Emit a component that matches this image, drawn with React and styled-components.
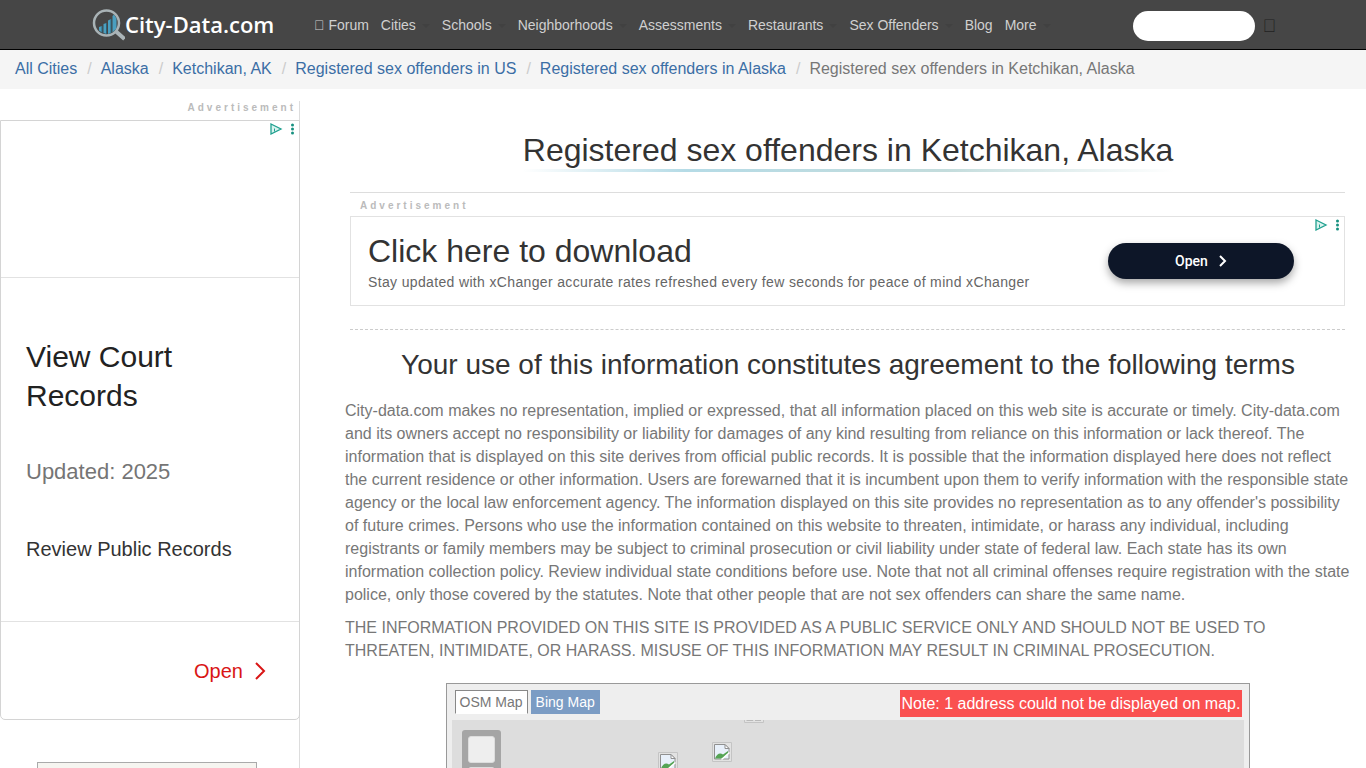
import React, { useState } from 'react';
import styled, { createGlobalStyle } from 'styled-components';


const GlobalStyle = createGlobalStyle`
* { box-sizing: border-box; }
body {
    margin: 0;
    font-family: "Liberation Sans", Arial, sans-serif;
    font-size: 16px;
    line-height: 23px;
    color: #777;
    background: #fff;
    overflow: hidden;
}
`

const NavBar = styled.header`
display: flex;
align-items: center;
height: 50px;
padding: 2px 0 0 92px;
background: #464646;
border-bottom: 1px solid #000;
`
const Logo = styled.a`
display: flex;
align-items: center;
width: 216px;
padding-bottom: 2px;
color: #fff;
text-decoration: none;
font-family: "Open Sans", sans-serif;
font-size: 22px;
font-weight: 600;
`
const Menu = styled.nav`
display: flex;
flex: 1;
font-size: 14px;
`
const MenuLink = styled.a`
display: flex;
align-items: center;
padding: 0 6px;
color: #d0d0d0;
text-decoration: none;
white-space: pre;
`
const Caret = styled.span`
width: 8px;
margin-left: 6px;
border: 4px solid transparent;
border-top-color: #414141;
border-bottom: 0;
`
const Search = styled.form`
display: flex;
align-items: center;
gap: 8px;
margin-right: 90px;
`
const SearchInput = styled.input`
width: 122px;
height: 30px;
padding: 0 12px;
border: 0;
border-radius: 15px;
background: #fff;
`
const SearchButton = styled.button`
padding: 2px 0 0;
border: 0;
background: none;
color: #222;
font-family: inherit;
font-size: 18px;
`

const Crumbs = styled.ol`
display: flex;
height: 39px;
margin: 0;
padding: 7px 15px 9px;
list-style: none;
background: #f5f5f5;
`
const Crumb = styled.li`
& + &::before {
    content: "/";
    padding: 0 9px 0 10px;
    color: #ccc;
}
a {
    color: #3b6ea5;
    text-decoration: none;
}
`

const Page = styled.div`
display: flex;
align-items: stretch;
`
const Sidebar = styled.aside`
width: 300px;
margin-top: 12px;
border-right: 1px solid #ddd;
`
const AdLabel = styled.div`
padding: ${props => props.$right ? '0 3px 0 0' : '0 0 0 10px'};
font-size: 10px;
line-height: 13px;
font-weight: bold;
letter-spacing: 3px;
color: #bbb;
text-align: ${props => props.$right ? 'right' : 'left'};
`
const SideAd = styled.div`
position: relative;
width: 300px;
margin-top: 6px;
border: 1px solid #d4d4d4;
border-radius: 0 0 5px 5px;
`
const SideAdPart = styled.div`
height: ${props => props.height};
padding: 0 25px;
border-top: ${props => props.$line ? '1px solid #e2e2e2' : '0'};
`
const SideTitle = styled.div`
padding-top: 59px;
font-size: 30px;
line-height: 39px;
color: #222;
`
const SideNote = styled.div`
margin-top: 43px;
font-size: 22px;
line-height: 28px;
color: #757575;
`
const SideText = styled.div`
margin-top: 49px;
font-size: 20px;
line-height: 28px;
color: #333;
`
const SideOpen = styled.a`
display: flex;
align-items: center;
justify-content: flex-end;
gap: 12px;
height: 98px;
padding-right: 8px;
color: #d91616;
font-size: 20px;
text-decoration: none;
`
const AdMarks = styled.svg`
position: absolute;
top: 2px;
right: 4px;
`
const SideBox = styled.div`
height: 250px;
margin: 42px 42px 0 37px;
border: 1px solid #aaa;
background: #f6f5f0;
`

const Main = styled.main`
flex: 1;
min-width: 0;
padding: 0 15px 0 45px;
`
const Title = styled.h1`
width: fit-content;
margin: 42px auto 20px;
font-size: 32px;
line-height: 38px;
font-weight: normal;
color: #333;
border-bottom: 3px solid;
border-image: linear-gradient(to right, #fff, #b5dbe6 25%, #c3dcdc 65%, #fff) 1;
`
const AdBlock = styled.section`
margin: 0 6px 0 5px;
padding: 6px 0 23px;
border-top: 1px solid #ddd;
border-bottom: 1px dashed #ccc;
`
const Banner = styled.div`
position: relative;
display: flex;
align-items: center;
justify-content: space-between;
height: 90px;
margin-top: 4px;
padding: 0 50px 0 17px;
border: 1px solid #e2e2e2;
`
const BannerTitle = styled.div`
padding-top: 5px;
font-size: 32px;
line-height: 36px;
color: #333;
`
const BannerText = styled.div`
font-size: 14px;
line-height: 26px;
color: #666;
letter-spacing: 0.025em;
`
const OpenButton = styled.button`
display: flex;
align-items: center;
justify-content: center;
gap: 11px;
width: 186px;
height: 36px;
border: 0;
border-radius: 18px;
background: #0d1628;
box-shadow: 0 4px 8px rgba(0, 0, 0, 0.35);
color: #fff;
font-family: Roboto, sans-serif;
font-size: 14px;
font-weight: 500;
`
const Terms = styled.h2`
margin: 18px 0 17px;
font-size: 28px;
line-height: 34px;
font-weight: normal;
text-align: center;
color: #333;
`
const Paragraph = styled.p`
margin: 0 0 10px;
`
const MapPanel = styled.section`
width: 80%;
height: 500px;
margin: 21px auto 0;
padding: 6px 5px;
border: 1px solid #999;
background: #eee;
`
const MapBar = styled.div`
display: flex;
align-items: flex-start;
height: 30px;
padding: 0 2px 0 3px;
gap: 3px;
`
const MapTab = styled.button`
height: 24px;
padding: 0 4px;
border: 1px solid ${props => props.$active ? '#888' : '#7b9cc4'};
border-bottom-color: ${props => props.$active ? '#fff' : '#7b9cc4'};
background: ${props => props.$active ? '#fff' : '#7b9cc4'};
color: ${props => props.$active ? '#777' : '#fff'};
font-family: inherit;
font-size: 14px;
`
const Note = styled.span`
margin-left: auto;
padding: 2px;
background: #fa5050;
color: #fff;
`
const MapCanvas = styled.div`
position: relative;
height: 460px;
overflow: hidden;
background: #ddd;
`
const Zoomer = styled.div`
position: absolute;
top: 10px;
left: 10px;
padding: 6px;
border-radius: 3px;
background: #a5a5a5;
`
const ZoomCell = styled.button`
display: block;
width: 27px;
height: 27px;
margin-bottom: 4px;
border: 1px solid #ddd;
border-radius: 3px;
background: #eee;
`
const Pin = styled.svg`
position: absolute;
left: ${props => props.x}px;
top: ${props => props.y}px;
`

const menu = [
    { name: 'Cities', more: true },
    { name: 'Schools', more: true },
    { name: 'Neighborhoods', more: true },
    { name: 'Assessments', more: true },
    { name: 'Restaurants', more: true },
    { name: 'Sex Offenders', more: true },
    { name: 'Blog' },
    { name: 'More', more: true },
]

const crumbs = ['All Cities', 'Alaska', 'Ketchikan, AK', 'Registered sex offenders in US', 'Registered sex offenders in Alaska']

const pins = [{ x: 292, y: -17 }, { x: 206, y: 32 }, { x: 260, y: 22 }]

function LogoMark(){
    return(
        <svg width="33" height="32" viewBox="0 0 33 32">
            <path d="M23.5 22 L32.5 30" stroke="#aab4b8" strokeWidth="4" />
            <path d="M7 18l3-1v6.500l-3-2z M11.500 15l3-1v11l-3-1z M16 11.500l3-1.500v14l-3 1z M20.500 7l1.500-1.500l2.500 4v10l-4 4z" fill="#4a9fc0" />
            <path d="M10 17v6.500 M14.500 14v11 M19 10v14" stroke="#2c6279" strokeWidth="1" />
            <circle cx="14.5" cy="14" r="12.500" fill="none" stroke="#a9b3b6" strokeWidth="2.500" />
        </svg>
    )
}

function Marks(){
    return(
        <AdMarks width="25" height="12" viewBox="0 0 25 12">
            <path d="M1 1 L11 6 L1 11 Z" fill="#d9f3ef" stroke="#1fa08f" strokeWidth="1.300" />
            <path d="M4.500 5.500v3" stroke="#1fa08f" />
            <circle cx="22.5" cy="2" r="1.500" fill="#16907f" />
            <circle cx="22.5" cy="6" r="1.500" fill="#16907f" />
            <circle cx="22.5" cy="10" r="1.500" fill="#16907f" />
        </AdMarks>
    )
}

function Chevron({ size, width }){
    return(
        <svg width={size / 2 + 2} height={size} viewBox={`0 0 ${size / 2 + 2} ${size}`}>
            <path d={`M1 1 L${size / 2} ${size / 2} L1 ${size - 1}`} fill="none" stroke="currentColor" strokeWidth={width} />
        </svg>
    )
}

function BrokenPin({ x, y }){
    return(
        <Pin x={x} y={y} width="20" height="20" viewBox="0 0 20 20">
            <path d="M.5 19.500V.5h19v19z" fill="#e2e2e2" stroke="#c4c4c4" />
            <path d="M2.500 2.500h10.500l4 4v10.500H2.500z" fill="#e8f0fa" stroke="#909090" />
            <path d="M13 2.500v4h4z" fill="#fff" stroke="#909090" />
            <path d="M3 16.500c2-5 5-6 8-4l5-3.500v2.500l-5.500 5z" fill="#55a455" />
            <path d="M9.500 17.500l8-7" stroke="#fff" strokeWidth="1.500" />
        </Pin>
    )
}

export default function App(){
    const [ tab, setTab ] = useState('OSM Map');

    return(
        <>
            <GlobalStyle />
            <NavBar>
                <Logo href="#"><LogoMark />City-Data.com</Logo>
                <Menu>
                    <MenuLink href="#">{'\uf086 Forum'}</MenuLink>
                    {menu.map(item => (
                        <MenuLink href="#" key={item.name}>{item.name}{item.more && <Caret />}</MenuLink>
                    ))}
                </Menu>
                <Search onSubmit={e => e.preventDefault()}>
                    <SearchInput type="text" aria-label="Search" />
                    <SearchButton type="submit" aria-label="Submit search">{'\uf002'}</SearchButton>
                </Search>
            </NavBar>
            <Crumbs>
                {crumbs.map(name => <Crumb key={name}><a href="#">{name}</a></Crumb>)}
                <Crumb>Registered sex offenders in Ketchikan, Alaska</Crumb>
            </Crumbs>
            <Page>
                <Sidebar>
                    <AdLabel $right>Advertisement</AdLabel>
                    <SideAd>
                        <Marks />
                        <SideAdPart height="156px" />
                        <SideAdPart height="344px" $line>
                            <SideTitle>View Court Records</SideTitle>
                            <SideNote>Updated: 2025</SideNote>
                            <SideText>Review Public Records</SideText>
                        </SideAdPart>
                        <SideAdPart height="98px" $line>
                            <SideOpen href="#">Open <Chevron size={18} width={2} /></SideOpen>
                        </SideAdPart>
                    </SideAd>
                    <SideBox />
                </Sidebar>
                <Main>
                    <Title>Registered sex offenders in Ketchikan, Alaska</Title>
                    <AdBlock>
                        <AdLabel>Advertisement</AdLabel>
                        <Banner>
                            <Marks />
                            <div>
                                <BannerTitle>Click here to download</BannerTitle>
                                <BannerText>Stay updated with xChanger accurate rates refreshed every few seconds for peace of mind xChanger</BannerText>
                            </div>
                            <OpenButton>Open <Chevron size={12} width={2} /></OpenButton>
                        </Banner>
                    </AdBlock>
                    <Terms>Your use of this information constitutes agreement to the following terms</Terms>
                    <Paragraph>
                        City-data.com makes no representation, implied or expressed, that all information placed on this web site is accurate or timely. City-data.com and its owners accept no responsibility or liability for damages of any kind resulting from reliance on this information or lack thereof. The information that is displayed on this site derives from official public records. It is possible that the information displayed here does not reflect the current residence or other information. Users are forewarned that it is incumbent upon them to verify information with the responsible state agency or the local law enforcement agency. The information displayed on this site provides no representation as to any offender's possibility of future crimes. Persons who use the information contained on this website to threaten, intimidate, or harass any individual, including registrants or family members may be subject to criminal prosecution or civil liability under state of federal law. Each state has its own information collection policy. Review individual state conditions before use. Note that not all criminal offenses require registration with the state police, only those covered by the statutes. Note that other people that are not sex offenders can share the same name.
                    </Paragraph>
                    <Paragraph>
                        THE INFORMATION PROVIDED ON THIS SITE IS PROVIDED AS A PUBLIC SERVICE ONLY AND SHOULD NOT BE USED TO THREATEN, INTIMIDATE, OR HARASS. MISUSE OF THIS INFORMATION MAY RESULT IN CRIMINAL PROSECUTION.
                    </Paragraph>
                    <MapPanel>
                        <MapBar>
                            {['OSM Map', 'Bing Map'].map(name => (
                                <MapTab key={name} $active={tab === name} onClick={() => setTab(name)}>{name}</MapTab>
                            ))}
                            <Note>Note: 1 address could not be displayed on map.</Note>
                        </MapBar>
                        <MapCanvas>
                            <Zoomer>
                                <ZoomCell aria-label="Zoom in" />
                                <ZoomCell aria-label="Zoom out" />
                            </Zoomer>
                            {pins.map(pin => <BrokenPin key={pin.x} x={pin.x} y={pin.y} />)}
                        </MapCanvas>
                    </MapPanel>
                </Main>
            </Page>
        </>
    )
}
